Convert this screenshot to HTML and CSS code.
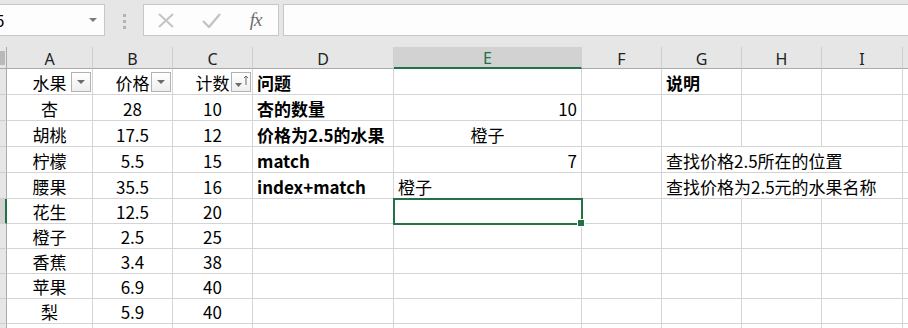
FILE: index.html
```html
<!DOCTYPE html>
<html lang="zh-CN">
<head>
    <meta charset="UTF-8">
    <title>水果价格表</title>
    <link rel="stylesheet" href="styles.css">
</head>
<body>
    <div class="formula-bar">
        <div class="name-box">
            <span class="name">E5</span>
            <svg class="caret" width="8" height="5" viewBox="0 0 8 5"><path d="M0 0 L8 0 L4 4 Z" fill="#7a7a7a"/></svg>
        </div>
        <div class="grip"><i></i><i></i><i></i></div>
        <div class="fx-box">
            <span class="slot">
                <svg width="16" height="15" viewBox="0 0 16 15"><path d="M1 1 L15 14 M15 1 L1 14" stroke="#c4c4c4" stroke-width="2"/></svg>
            </span>
            <span class="slot">
                <svg width="19" height="15" viewBox="0 0 19 15"><path d="M1 8 L7 14 L18 1" stroke="#c4c4c4" stroke-width="2.4" fill="none"/></svg>
            </span>
            <span class="slot fx">fx</span>
        </div>
        <div class="formula-input"></div>
    </div>

    <div class="sheet">
        <!-- column headers -->
        <div class="corner"><span></span></div>
        <div class="ch">A</div>
        <div class="ch">B</div>
        <div class="ch">C</div>
        <div class="ch">D</div>
        <div class="ch active">E</div>
        <div class="ch">F</div>
        <div class="ch">G</div>
        <div class="ch">H</div>
        <div class="ch">I</div>
        <div class="ch"></div>

        <!-- row 1 -->
        <div class="rh"></div>
        <div class="c center filter">水果<span class="filter-btn"><svg width="8" height="5" viewBox="0 0 8 5"><path d="M0 0 L8 0 L4 4 Z" fill="#6b6b6b"/></svg></span></div>
        <div class="c center filter">价格<span class="filter-btn"><svg width="8" height="5" viewBox="0 0 8 5"><path d="M0 0 L8 0 L4 4 Z" fill="#6b6b6b"/></svg></span></div>
        <div class="c center filter">计数<span class="filter-btn sorted"><svg width="18" height="16" viewBox="0 0 18 16"><path d="M3 10 L10 10 L6.5 14 Z" fill="#6b6b6b"/><path d="M14 3 L14 12 M12 5 L14 3 L16 5" stroke="#6b6b6b" stroke-width="1" fill="none"/></svg></span></div>
        <div class="c b">问题</div>
        <div class="c"></div>
        <div class="c"></div>
        <div class="c b">说明</div>
        <div class="c"></div>
        <div class="c"></div>
        <div class="c"></div>

        <!-- row 2 -->
        <div class="rh"></div>
        <div class="c center">杏</div>
        <div class="c center">28</div>
        <div class="c center">10</div>
        <div class="c b">杏的数量</div>
        <div class="c right">10</div>
        <div class="c"></div>
        <div class="c"></div>
        <div class="c"></div>
        <div class="c"></div>
        <div class="c"></div>

        <!-- row 3 -->
        <div class="rh"></div>
        <div class="c center">胡桃</div>
        <div class="c center">17.5</div>
        <div class="c center">12</div>
        <div class="c b">价格为2.5的水果</div>
        <div class="c center">橙子</div>
        <div class="c"></div>
        <div class="c"></div>
        <div class="c"></div>
        <div class="c"></div>
        <div class="c"></div>

        <!-- row 4 -->
        <div class="rh"></div>
        <div class="c center">柠檬</div>
        <div class="c center">5.5</div>
        <div class="c center">15</div>
        <div class="c b">match</div>
        <div class="c right">7</div>
        <div class="c"></div>
        <div class="c span3">查找价格2.5所在的位置</div>
        <div class="c"></div>

        <!-- row 5 -->
        <div class="rh"></div>
        <div class="c center">腰果</div>
        <div class="c center">35.5</div>
        <div class="c center">16</div>
        <div class="c b">index+match</div>
        <div class="c">橙子</div>
        <div class="c"></div>
        <div class="c span3">查找价格为2.5元的水果名称</div>
        <div class="c"></div>

        <!-- row 6 -->
        <div class="rh active"></div>
        <div class="c center">花生</div>
        <div class="c center">12.5</div>
        <div class="c center">20</div>
        <div class="c"></div>
        <div class="c selected"></div>
        <div class="c"></div>
        <div class="c"></div>
        <div class="c"></div>
        <div class="c"></div>
        <div class="c"></div>

        <!-- row 7 -->
        <div class="rh"></div>
        <div class="c center">橙子</div>
        <div class="c center">2.5</div>
        <div class="c center">25</div>
        <div class="c"></div>
        <div class="c"></div>
        <div class="c"></div>
        <div class="c"></div>
        <div class="c"></div>
        <div class="c"></div>
        <div class="c"></div>

        <!-- row 8 -->
        <div class="rh"></div>
        <div class="c center">香蕉</div>
        <div class="c center">3.4</div>
        <div class="c center">38</div>
        <div class="c"></div>
        <div class="c"></div>
        <div class="c"></div>
        <div class="c"></div>
        <div class="c"></div>
        <div class="c"></div>
        <div class="c"></div>

        <!-- row 9 -->
        <div class="rh"></div>
        <div class="c center">苹果</div>
        <div class="c center">6.9</div>
        <div class="c center">40</div>
        <div class="c"></div>
        <div class="c"></div>
        <div class="c"></div>
        <div class="c"></div>
        <div class="c"></div>
        <div class="c"></div>
        <div class="c"></div>

        <!-- row 10 -->
        <div class="rh"></div>
        <div class="c center">梨</div>
        <div class="c center">5.9</div>
        <div class="c center">40</div>
        <div class="c"></div>
        <div class="c"></div>
        <div class="c"></div>
        <div class="c"></div>
        <div class="c"></div>
        <div class="c"></div>
        <div class="c"></div>

        <!-- row 11 (cut off) -->
        <div class="rh"></div>
        <div class="c"></div>
        <div class="c"></div>
        <div class="c"></div>
        <div class="c"></div>
        <div class="c"></div>
        <div class="c"></div>
        <div class="c"></div>
        <div class="c"></div>
        <div class="c"></div>
        <div class="c"></div>
    </div>
</body>
</html>
```

FILE: styles.css
```css
* {
    box-sizing: border-box;
}
html, body {
    margin: 0;
    padding: 0;
    overflow: hidden;
}
body {
    width: 908px;
    height: 328px;
    background-color: #e6e6e6;
    font-family: "Noto Sans CJK SC", sans-serif;
    color: #000;
}

/* formula bar */
.formula-bar {
    display: flex;
    align-items: flex-start;
    height: 47px;
    padding-top: 4px;
}
.name-box {
    display: flex;
    align-items: center;
    justify-content: space-between;
    width: 145px;
    height: 32px;
    margin-left: -40px;
    padding: 0 7px 0 25px;
    background-color: #fdfdfd;
    border: 1px solid #c6c6c6;
    font-size: 16px;
}
.grip {
    display: flex;
    flex-direction: column;
    gap: 3px;
    width: 38px;
    align-items: center;
    padding-top: 10px;
}
.grip i {
    display: block;
    width: 3px;
    height: 3px;
    background-color: #b3b3b3;
}
.fx-box {
    display: flex;
    align-items: center;
    width: 136px;
    height: 32px;
    background-color: #fdfdfd;
    border: 1px solid #c6c6c6;
}
.slot {
    width: 45px;
    display: flex;
    justify-content: center;
    align-items: center;
}
.fx {
    font-family: "Liberation Serif", serif;
    font-style: italic;
    font-size: 19px;
    color: #6e6e6e;
    letter-spacing: -1px;
}
.formula-input {
    flex: 1;
    height: 32px;
    margin-left: 4px;
    margin-right: -10px;
    background-color: #fdfdfd;
    border: 1px solid #c6c6c6;
}

/* sheet */
.sheet {
    display: grid;
    grid-template-columns: 7px 86px 80px 80px 141px 188px 80px 80px 80px 81px 20px;
    grid-template-rows: 22px 26px 26px 26px 26px 26px 25px 25px 25px 25px 25px 20px;
    background-color: #fff;
}
.corner {
    background-color: #e6e6e6;
    border-right: 1px solid #ababab;
    border-bottom: 1px solid #ababab;
    display: flex;
    align-items: flex-end;
    justify-content: flex-end;
    padding: 0 1px 3px 0;
}
.corner span {
    width: 5px;
    height: 14px;
    background-color: #b9b9b9;
}
.ch {
    background-color: #e6e6e6;
    border-right: 1px solid #cfcfcf;
    border-bottom: 1px solid #ababab;
    display: flex;
    justify-content: center;
    align-items: center;
    font-family: "Noto Sans", sans-serif;
    font-size: 16px;
    color: #222;
    padding-top: 2px;
}
.ch.active {
    background-color: #d2d2d2;
    border-bottom: 2px solid #217346;
    color: #217346;
}
.rh {
    background-color: #e6e6e6;
    border-right: 1px solid #ababab;
    border-bottom: 1px solid #cfcfcf;
}
.rh.active {
    background-color: #d2d2d2;
    border-right: 2px solid #217346;
}
.c {
    border-right: 1px solid #d4d4d4;
    border-bottom: 1px solid #d4d4d4;
    display: flex;
    align-items: center;
    padding: 1px 4px 0 4px;
    font-size: 17px;
    white-space: nowrap;
}
.c.center {
    justify-content: center;
}
.c.right {
    justify-content: flex-end;
}
.c.b {
    font-weight: bold;
}
.c.span3 {
    grid-column: span 3;
}
.c.filter {
    position: relative;
}
.filter-btn {
    position: absolute;
    right: 1px;
    top: 3px;
    width: 20px;
    height: 20px;
    border: 1px solid #b2b2b2;
    background: linear-gradient(#ffffff, #eeeeee);
    display: flex;
    align-items: center;
    justify-content: center;
}
.filter-btn.sorted {
    align-items: flex-start;
}
.c.selected {
    position: relative;
}
.c.selected::after {
    content: "";
    position: absolute;
    left: -1px;
    top: -1px;
    right: -2px;
    bottom: -2px;
    border: 2px solid #217346;
}
.c.selected::before {
    content: "";
    position: absolute;
    right: -4px;
    bottom: -4px;
    width: 6px;
    height: 6px;
    background-color: #217346;
    border: 1px solid #fff;
    z-index: 1;
}
```
